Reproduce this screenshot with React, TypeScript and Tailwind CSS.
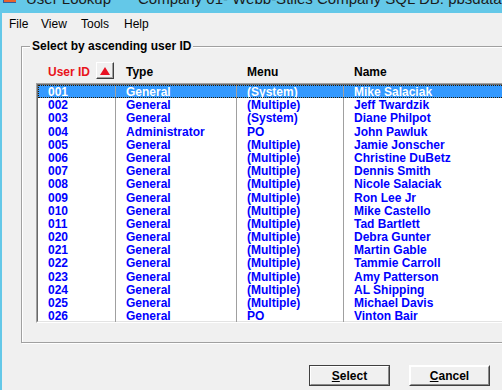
import React from "react";

type User = { id: string; type: string; menu: string; name: string };

const users: User[] = [
  { id: "001", type: "General", menu: "(System)", name: "Mike Salaciak" },
  { id: "002", type: "General", menu: "(Multiple)", name: "Jeff Twardzik" },
  { id: "003", type: "General", menu: "(System)", name: "Diane Philpot" },
  { id: "004", type: "Administrator", menu: "PO", name: "John Pawluk" },
  { id: "005", type: "General", menu: "(Multiple)", name: "Jamie Jonscher" },
  { id: "006", type: "General", menu: "(Multiple)", name: "Christine DuBetz" },
  { id: "007", type: "General", menu: "(Multiple)", name: "Dennis Smith" },
  { id: "008", type: "General", menu: "(Multiple)", name: "Nicole Salaciak" },
  { id: "009", type: "General", menu: "(Multiple)", name: "Ron Lee Jr" },
  { id: "010", type: "General", menu: "(Multiple)", name: "Mike Castello" },
  { id: "011", type: "General", menu: "(Multiple)", name: "Tad Bartlett" },
  { id: "020", type: "General", menu: "(Multiple)", name: "Debra Gunter" },
  { id: "021", type: "General", menu: "(Multiple)", name: "Martin Gable" },
  { id: "022", type: "General", menu: "(Multiple)", name: "Tammie Carroll" },
  { id: "023", type: "General", menu: "(Multiple)", name: "Amy Patterson" },
  { id: "024", type: "General", menu: "(Multiple)", name: "AL Shipping" },
  { id: "025", type: "General", menu: "(Multiple)", name: "Michael Davis" },
  { id: "026", type: "General", menu: "PO", name: "Vinton Bair" },
];

function UserRow({ user, selected }: { user: User; selected: boolean }) {
  return (
    <div
      className={
        selected
          ? "flex h-[13.2px] bg-[#3399ff] text-white outline outline-1 outline-dotted outline-offset-[-1px] outline-[#2a1a00]"
          : "flex h-[13.2px] text-[#0000ff]"
      }
    >
      <div className="h-full w-[78px] border-r border-[#a0a0a0] pl-[10px] leading-[15px]">{user.id}</div>
      <div className="h-full w-[121px] border-r border-[#a0a0a0] pl-[10px] leading-[15px]">{user.type}</div>
      <div className="h-full w-[107px] border-r border-[#a0a0a0] pl-[10px] leading-[15px]">{user.menu}</div>
      <div className="h-full flex-1 pl-[10px] leading-[15px]">{user.name}</div>
    </div>
  );
}

function WinButton({ label, def }: { label: string; def?: boolean }) {
  return (
    <button
      className={
        def
          ? "h-[21px] w-[81px] border border-[#404040] bg-[#f0f0f0]"
          : "h-[21px] w-[81px] border border-t-white border-l-white border-r-[#404040] border-b-[#404040] bg-[#f0f0f0]"
      }
    >
      <span className="flex h-full w-full items-center justify-center border border-t-white border-l-white border-r-[#8a8a8a] border-b-[#8a8a8a] text-[12px] font-bold text-black">
        <span className="underline">{label[0]}</span>
        {label.slice(1)}
      </span>
    </button>
  );
}

export default function App() {
  return (
    <div className="flex h-[390px] w-[502px] flex-col overflow-hidden bg-[#64c8e8] font-['Liberation_Sans',Arial,sans-serif]">
      {/* title bar, only its lower edge is on screen */}
      <div className="flex h-[13px] shrink-0 items-start overflow-hidden text-[15px] leading-[15px] text-[#1b1b1b]">
        <div className="ml-[3px] h-[3px] w-[13px] border-l border-b border-[#2f5f9f] bg-[#e8622c]" />
        <span className="-mt-[9px] ml-[10px] w-[112px] whitespace-nowrap">User Lookup</span>
        <span className="-mt-[9px] whitespace-nowrap">Company 01- Webb-Stiles Company SQL DB: pbsdata</span>
      </div>

      <div className="flex flex-1 flex-col border-l-2 border-[#64c8e8] bg-[#f0f0f0]">
        {/* menu */}
        <div className="flex h-[19px] shrink-0 items-center pt-[3px] text-[12px] text-black">
          <span className="ml-[7px] w-[32px]">File</span>
          <span className="w-[40px]">View</span>
          <span className="w-[43px]">Tools</span>
          <span>Help</span>
        </div>

        {/* group box */}
        <div className="relative ml-[19px] mt-[14px] h-[297px] w-[500px] shrink-0 border border-[#a0a0a0] pl-[14px] pt-[15px] shadow-[1px_1px_0_#ffffff,inset_1px_1px_0_#ffffff]">
          <span className="absolute left-[8px] top-[-8px] bg-[#f0f0f0] px-[2px] text-[12px] font-bold leading-[14px] text-black">
            Select by ascending user ID
          </span>

          <div className="flex h-[17px] items-center text-[12px] font-bold text-black">
            <div className="flex w-[80px] items-center pl-[12px]">
              <span className="pt-[2px] text-[#e8141c]">User ID</span>
              <span className="ml-[6px] flex h-[17px] w-[18px] items-center justify-center border border-t-white border-l-white border-r-[#404040] border-b-[#404040] bg-[#f0f0f0] shadow-[inset_-1px_-1px_0_#a0a0a0]">
                <svg width="10" height="8" viewBox="0 0 10 8">
                  <path d="M5 0 L10 8 L0 8 Z" fill="#e81123" />
                </svg>
              </span>
            </div>
            <div className="w-[121px] pl-[10px] pt-[2px]">Type</div>
            <div className="w-[107px] pl-[10px] pt-[2px]">Menu</div>
            <div className="pl-[10px] pt-[2px]">Name</div>
          </div>

          {/* list box */}
          <div className="mt-[4px] h-[240px] border border-t-[#a0a0a0] border-l-[#a0a0a0] border-r-white border-b-white">
            <div className="h-full border border-t-[#696969] border-l-[#696969] border-r-[#e3e3e3] border-b-[#e3e3e3] bg-white text-[12px] font-bold">
              {users.map((u, i) => (
                <UserRow key={u.id} user={u} selected={i === 0} />
              ))}
            </div>
          </div>
        </div>

        {/* buttons */}
        <div className="mt-[22px] flex justify-end gap-[19px] pr-[12px]">
          <WinButton label="Select" def />
          <WinButton label="Cancel" />
        </div>
      </div>
    </div>
  );
}
